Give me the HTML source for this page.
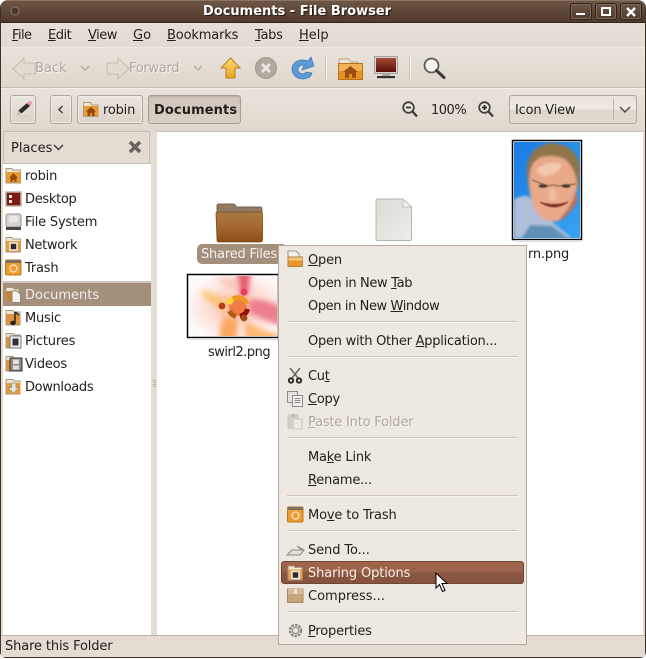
<!DOCTYPE html>
<html><head><meta charset="utf-8"><style>
*{box-sizing:border-box}
html,body{margin:0;padding:0;background:#fff}
body{width:646px;height:659px;position:relative;overflow:hidden;font:13px/16px "DejaVu Sans",sans-serif;color:#24201c}
.a{position:absolute}
.t{position:absolute;white-space:nowrap;line-height:16px;height:16px;margin-top:1px}
u{text-decoration:underline;text-underline-offset:1px}
.btn{position:absolute;border:1px solid #b2a79b;border-radius:3px;background:linear-gradient(#ebe5de,#dcd3c9);box-shadow:inset 0 0 0 1px #f0ebe5}
.sep{position:absolute;left:287px;width:231px;height:2px;background:linear-gradient(#cfc5ba 50%,#f8f6f3 50%)}
.dis{color:#b0a79d;text-shadow:1px 1px 0 #f6f3ef}
svg{position:absolute;overflow:visible}
</style></head><body>
<!-- window frame -->
<div class="a" style="left:0;top:0;width:646px;height:658px;background:#e4dcd3;border:1px solid #3f342c;border-top:0;border-radius:8px 8px 6px 6px;overflow:hidden">
<div class="a" style="left:0;top:0;width:644px;height:23px;background:linear-gradient(#6e5644,#4f392b);border-top:1px solid #8a7463;border-bottom:1px solid #33261d"></div>
<div class="a" style="left:0;top:23px;width:644px;height:25px;background:linear-gradient(#e7e0d8,#e2dad1);border-bottom:1px solid #f0ebe6"></div>
<div class="a" style="left:0;top:48px;width:644px;height:40px;background:linear-gradient(#e9e3db,#dfd7cd);border-bottom:1px solid #c8bdb1"></div>
<div class="a" style="left:0;top:88px;width:644px;height:43px;background:linear-gradient(#e9e3db,#e0d8cf);border-top:1px solid #f2eee9"></div>
</div>
<svg style="left:10px;top:5px" width="12" height="12"><circle cx="5" cy="6" r="4" fill="#4c382b" stroke="#8d7b6d"/></svg>
<div class="t" style="left:203px;top:3px;color:#fff;font-weight:bold;font-size:13px;text-shadow:1px 1px 1px #20150d">Documents - File Browser</div>
<!-- window buttons -->
<div class="a" style="left:570px;top:3px;width:22px;height:17px;border:1px solid #2f231b;border-radius:3px;background:linear-gradient(#6d5646,#503a2c);box-shadow:inset 0 0 0 1px #7f6a5a"></div>
<div class="a" style="left:595px;top:3px;width:22px;height:17px;border:1px solid #2f231b;border-radius:3px;background:linear-gradient(#6d5646,#503a2c);box-shadow:inset 0 0 0 1px #7f6a5a"></div>
<div class="a" style="left:620px;top:3px;width:22px;height:17px;border:1px solid #2f231b;border-radius:3px;background:linear-gradient(#6d5646,#503a2c);box-shadow:inset 0 0 0 1px #7f6a5a"></div>
<div class="a" style="left:576px;top:13px;width:9px;height:2px;background:#fff"></div>
<div class="a" style="left:601px;top:7px;width:10px;height:9px;border:2px solid #fff;border-top-width:2px"></div>
<svg style="left:626px;top:7px" width="10" height="10"><path d="M1 1L9 9M9 1L1 9" stroke="#fff" stroke-width="2.4"/></svg>
<!-- menu -->
<div class="t" style="left:12px;top:27px;letter-spacing:-.6px"><u>F</u>ile</div>
<div class="t" style="left:48px;top:27px;letter-spacing:-.5px"><u>E</u>dit</div>
<div class="t" style="left:88px;top:27px;letter-spacing:-.5px"><u>V</u>iew</div>
<div class="t" style="left:133px;top:27px"><u>G</u>o</div>
<div class="t" style="left:167px;top:27px;letter-spacing:-.15px"><u>B</u>ookmarks</div>
<div class="t" style="left:255px;top:27px;letter-spacing:-.3px"><u>T</u>abs</div>
<div class="t" style="left:299px;top:27px"><u>H</u>elp</div>
<!-- toolbar -->
<svg style="left:12px;top:57px" width="24" height="23"><path d="M1 11.5L12 1V6H23V17H12V22Z" fill="#e2dbd2" stroke="#c4bcb2"/></svg>
<div class="t dis" style="left:35px;top:60px">Back</div>
<svg style="left:80px;top:65px" width="10" height="7"><path d="M1 1L5 5L9 1" fill="none" stroke="#b5aca2" stroke-width="1.5"/></svg>
<svg style="left:106px;top:57px" width="24" height="23"><path d="M23 11.5L12 1V6H1V17H12V22Z" fill="#e2dbd2" stroke="#c4bcb2"/></svg>
<div class="t dis" style="left:129px;top:60px;letter-spacing:-.3px">Forward</div>
<svg style="left:193px;top:65px" width="10" height="7"><path d="M1 1L5 5L9 1" fill="none" stroke="#b5aca2" stroke-width="1.5"/></svg>
<svg style="left:220px;top:57px" width="21" height="22"><defs><linearGradient id="up" x1="0" y1="0" x2="0" y2="1"><stop offset="0" stop-color="#fbdc7e"/><stop offset="1" stop-color="#e9a21e"/></linearGradient></defs><path d="M10.5 1L20 11H15V21H6V11H1Z" fill="url(#up)" stroke="#b87d14"/></svg>
<svg style="left:255px;top:57px" width="22" height="22"><circle cx="11" cy="11" r="10.5" fill="#b2a89f"/><circle cx="11" cy="11" r="10.5" fill="none" stroke="#a1978e"/><path d="M7 7L15 15M15 7L7 15" stroke="#ece7e1" stroke-width="3"/></svg>
<svg style="left:291px;top:57px" width="24" height="24"><path d="M12 3C5 3 1 7 1 12C1 18 6 22 12 22C16 22 20 20 21 16L15 15C14 16.5 13.5 17 12 17C9 17 7 15 7 12.5C7 10 9 8 12 8L13 8L11 13L23 9L20 0L17 4C15.5 3.4 14 3 12 3Z" fill="#5d9bd8" stroke="#3f78b5" stroke-width=".7"/></svg>
<div class="a" style="left:325px;top:56px;width:2px;height:23px;background:linear-gradient(90deg,#cfc5ba 50%,#f3efea 50%)"></div>
<svg style="left:338px;top:58px" width="26" height="22"><path d="M1 1H11L13 4H20V8H1Z" fill="#efe4d4" stroke="#b7a38d"/><rect x=".5" y="5.5" width="24" height="16" fill="#e89120" stroke="#b8721d"/><rect x="1" y="6" width="23" height="7" fill="#f2b258"/><path d="M12.5 8L20 14H18V20H14V16H11V20H7V14H5Z" fill="#9c4e13"/></svg>
<svg style="left:374px;top:56px" width="25" height="24"><rect x=".5" y=".5" width="23" height="17" fill="#d4d0cb" stroke="#a8a39d"/><defs><linearGradient id="scr" x1="0" y1="0" x2="0" y2="1"><stop offset="0" stop-color="#a34b33"/><stop offset="1" stop-color="#5c0f08"/></linearGradient></defs><rect x="2" y="2" width="20" height="14" fill="url(#scr)"/><rect x="8" y="18" width="8" height="2" fill="#aaa59f"/><rect x="3" y="20" width="18" height="2" fill="#333"/><rect x="3" y="22" width="18" height="1" fill="#c4beb6"/></svg>
<div class="a" style="left:409px;top:56px;width:2px;height:23px;background:linear-gradient(90deg,#cfc5ba 50%,#f3efea 50%)"></div>
<svg style="left:423px;top:57px" width="23" height="22"><circle cx="8.5" cy="8.5" r="7" fill="#f5f3f0" stroke="#5f5a54" stroke-width="1.8"/><path d="M13.5 13.5L21 20.5" stroke="#3f3a35" stroke-width="3" stroke-linecap="round"/></svg>
<!-- location bar -->
<div class="btn" style="left:10px;top:95px;width:26px;height:29px"></div>
<svg style="left:15px;top:100px" width="18" height="18"><path d="M2 15L4 10L12 3L15 6L7 13Z" fill="#2d2a27"/><path d="M11.5 3.5L14 1Q16 .5 17 2.5Q17.5 4 15.5 6Z" fill="#e89cc0"/><path d="M2 15L4 11L6 13Z" fill="#e7d4b5"/><path d="M1 16H15" stroke="#cfc6bb"/></svg>
<div class="btn" style="left:50px;top:95px;width:22px;height:29px"></div>
<svg style="left:58px;top:105px" width="6" height="9"><path d="M4.5 1L1 4.5L4.5 8" fill="none" stroke="#4a443e" stroke-width="1.5"/></svg>
<div class="btn" style="left:77px;top:95px;width:66px;height:29px"></div>
<svg style="left:83px;top:102px" width="16" height="15"><path d="M.5.5H7L9 3H15V14.5H.5Z" fill="#efe4d4" stroke="#b29a7e"/><rect x="1" y="4" width="14" height="10" fill="#ea9b30"/><path d="M8 5L13 9.5H11.5V14H9V11H7V14H4.5V9.5H3Z" fill="#8e4711"/></svg>
<div class="t" style="left:103px;top:102px;letter-spacing:-.2px">robin</div>
<div class="a" style="left:148px;top:95px;width:93px;height:29px;border:1px solid #a99d90;border-radius:3px;background:linear-gradient(#cfc5ba,#d9d0c6);box-shadow:inset 0 1px 1px #b9aea2"></div>
<div class="t" style="left:154px;top:102px;font-weight:bold;letter-spacing:.1px">Documents</div>
<svg style="left:402px;top:101px" width="16" height="17"><circle cx="6.5" cy="6.5" r="5.3" fill="#ece7e1" stroke="#45403b" stroke-width="1.8"/><path d="M4 6.5H9" stroke="#2f2b27" stroke-width="1.8"/><path d="M10.5 10.5L15 15.5" stroke="#3d3833" stroke-width="2.2"/></svg>
<div class="t" style="left:431px;top:102px;letter-spacing:-.5px">100%</div>
<svg style="left:478px;top:101px" width="16" height="17"><circle cx="6.5" cy="6.5" r="5.3" fill="#ece7e1" stroke="#45403b" stroke-width="1.8"/><path d="M4 6.5H9M6.5 4V9" stroke="#2f2b27" stroke-width="1.8"/><path d="M10.5 10.5L15 15.5" stroke="#3d3833" stroke-width="2.2"/></svg>
<div class="a" style="left:509px;top:95px;width:128px;height:29px;border:1px solid #b2a79b;border-radius:3px;background:linear-gradient(#e7e1da 0,#efeae5 45%,#dfd6cc 55%,#e3dbd2 100%)"></div>
<div class="t" style="left:515px;top:102px;letter-spacing:-.2px">Icon View</div>
<div class="a" style="left:613px;top:99px;width:1px;height:21px;background:#bdb2a6"></div>
<svg style="left:619px;top:106px" width="12" height="8"><path d="M1 1L6 6L11 1" fill="none" stroke="#4a443e" stroke-width="1.4"/></svg>
<!-- sidebar -->
<div class="a" style="left:3px;top:131px;width:147px;height:33px;background:#e4dcd3;border:1px solid #c8bdb1"></div>
<div class="t" style="left:11px;top:140px">Places</div>
<svg style="left:53px;top:144px" width="11" height="7"><path d="M1 1L5.5 5.5L10 1" fill="none" stroke="#3c3732" stroke-width="1.4"/></svg>
<svg style="left:128px;top:140px" width="14" height="14"><path d="M2 2L12 12M12 2L2 12" stroke="#6a645d" stroke-width="3.6"/></svg>
<div class="a" style="left:3px;top:164px;width:148px;height:471px;background:#fff"></div>
<div class="a" style="left:3px;top:281px;width:148px;height:2px;background:#cfc5ba"></div>
<div class="a" style="left:3px;top:283px;width:148px;height:23px;background:#a48f7c"></div>
<div class="t" style="left:25px;top:168px;letter-spacing:-.2px">robin</div>
<div class="t" style="left:25px;top:191px;letter-spacing:-.3px">Desktop</div>
<div class="t" style="left:25px;top:214px;letter-spacing:-.2px">File System</div>
<div class="t" style="left:25px;top:237px;letter-spacing:-.3px">Network</div>
<div class="t" style="left:25px;top:260px;letter-spacing:-.2px">Trash</div>
<div class="t" style="left:25px;top:287px;color:#f2ede8">Documents</div>
<div class="t" style="left:25px;top:310px;letter-spacing:-.2px">Music</div>
<div class="t" style="left:25px;top:333px;letter-spacing:-.15px">Pictures</div>
<div class="t" style="left:25px;top:356px;letter-spacing:-.2px">Videos</div>
<div class="t" style="left:25px;top:379px;letter-spacing:-.35px">Downloads</div>
<!-- sidebar icons -->
<svg style="left:5px;top:168px" width="17" height="235">
<g><path d="M1 .5H7L8 2H15.5V15H1Z" fill="#f0e6d8" stroke="#ad9578"/><rect x="1.5" y="4" width="14" height="10.5" fill="#ea9b30"/><path d="M8.5 5L13 10H11.5V14H9.5V12H7.5V14H5.5V10H4Z" fill="#954a10"/></g>
<rect x="1" y="24" width="15" height="14" fill="#7c1a10" stroke="#b9b3ac" stroke-width="1.5"/><rect x="4" y="27" width="3" height="3" fill="#eee"/><rect x="4" y="32" width="3" height="3" fill="#eee"/>
<rect x="1" y="46" width="15" height="13" rx="2" fill="#d6d4d0" stroke="#96928c"/><ellipse cx="8.5" cy="51" rx="5" ry="3.5" fill="#eceae7"/><rect x="1" y="59" width="15" height="3" fill="#4a4641"/>
<path d="M1 69.5H7L8 71H15.5V84H1Z" fill="#f0e6d8" stroke="#ad9578"/><rect x="1.5" y="73" width="14" height="10.5" fill="#e99b37"/><rect x="5" y="75" width="7" height="7" fill="#2e2a27" stroke="#f4efe8" stroke-width="1.5"/>
<rect x=".5" y="92" width="15.5" height="15" rx="1" fill="#ee9a2e" stroke="#be7a20"/><rect x="1" y="92" width="15" height="3" fill="#7d6f62"/><circle cx="8.5" cy="100.5" r="3.5" fill="none" stroke="#f8dfb9" stroke-width="1.5"/>
<g transform="translate(0,119)"><path d="M1 .5H8L9 2H14V15H1Z" fill="#f0e6d8" stroke="#ad9578"/><rect x="1.5" y="4" width="8" height="10.5" fill="#c98230"/><path d="M7 4H12L15.5 7V15.5H7Z" fill="#f6f4f0" stroke="#8a857d"/></g>
<g transform="translate(0,142)"><path d="M1 .5H8L9 2H15V15H1Z" fill="#f0e6d8" stroke="#ad9578"/><rect x="1.5" y="4" width="13" height="10.5" fill="#de9436"/><path d="M10 2V12" stroke="#222" stroke-width="1.5"/><ellipse cx="8" cy="13" rx="2.8" ry="2.2" fill="#222"/><path d="M10 2L14 5" stroke="#222" stroke-width="1.5"/></g>
<g transform="translate(0,165)"><path d="M1 .5H8L9 2H15V15H1Z" fill="#f0e6d8" stroke="#ad9578"/><rect x="1.5" y="4" width="13" height="10.5" fill="#de9436"/><rect x="5" y="3" width="11" height="12" fill="#eee" stroke="#777"/><rect x="7.5" y="5.5" width="6" height="7" fill="#333"/></g>
<g transform="translate(0,188)"><path d="M1 .5H8L9 2H15V15H1Z" fill="#f0e6d8" stroke="#ad9578"/><rect x="1.5" y="4" width="13" height="10.5" fill="#de9436"/><rect x="5" y="2" width="12" height="13" fill="#8d8a86" stroke="#333"/><rect x="8" y="3.5" width="6" height="4.5" fill="#e2e0dc"/><rect x="8" y="9.5" width="6" height="4" fill="#e2e0dc"/></g>
<g transform="translate(0,211)"><path d="M1 .5H8L9 2H15V15H1Z" fill="#f0e6d8" stroke="#ad9578"/><rect x="1.5" y="4" width="14" height="10.5" fill="#ea9b30"/><path d="M6.5 4H11V8.5H14L8.5 14.5L3 8.5H6.5Z" fill="#e6e2dc" stroke="#8e8a84" stroke-width=".7"/></g>
</svg>
<!-- pane handle -->
<div class="a" style="left:151px;top:131px;width:6px;height:504px;background:#e4dcd3"></div>
<div class="a" style="left:153px;top:380px;width:3px;height:7px;background:repeating-linear-gradient(#b9aea2 0 1px,transparent 1px 2px)"></div>
<!-- icon view -->
<div class="a" style="left:157px;top:131px;width:486px;height:504px;background:#fff;border-top:1px solid #cbbfb2"></div>
<svg style="left:215px;top:203px" width="48" height="40"><defs><linearGradient id="fb" x1="0" y1="0" x2="0" y2="1"><stop offset="0" stop-color="#a87a45"/><stop offset=".45" stop-color="#a66a32"/><stop offset="1" stop-color="#8a4d16"/></linearGradient></defs><path d="M2 10V2.5Q2 1 4 1H19L22 4H45Q47 4 47 6V10Z" fill="#8f7a66" stroke="#7b6755"/><rect x="5" y="3" width="12" height="1.5" fill="#a07c50"/><path d="M1 10.5Q1 9 3 9H45Q47.5 9 47.5 10.5V37Q47.5 39 45 39H4Q2 39 2 37Z" fill="url(#fb)" stroke="#7b4a1c" stroke-width=".8"/></svg>
<div class="a" style="left:197px;top:244px;width:90px;height:20px;background:#a48f7c;border-radius:5px"></div>
<div class="t" style="left:201px;top:246px;color:#f5f1ec;letter-spacing:-.2px">Shared Files</div>
<!-- swirl -->
<svg style="left:187px;top:274px" width="92" height="65"><defs>
<radialGradient id="sw" cx=".55" cy=".52" r=".6"><stop offset="0" stop-color="#f7a48c"/><stop offset=".45" stop-color="#fbd8cc"/><stop offset="1" stop-color="#fffafa"/></radialGradient>
<filter id="bl1" x="-20%" y="-20%" width="140%" height="140%"><feGaussianBlur stdDeviation=".35"/></filter>
<filter id="bl2" x="-40%" y="-40%" width="180%" height="180%"><feGaussianBlur stdDeviation="2.6"/></filter>
<clipPath id="swc"><rect x="2" y="2" width="88" height="60"/></clipPath>
</defs>
<rect x=".5" y=".5" width="91" height="63" fill="#fff" stroke="#000" stroke-width="1.5"/>
<g clip-path="url(#swc)"><rect x="2" y="2" width="88" height="60" fill="url(#sw)"/>
<g filter="url(#bl2)"><path d="M50 -2L64 -2L61 20L53 22Z" fill="#e85f70"/><path d="M62 26Q80 24 96 34L96 52Q75 46 62 38Z" fill="#ee808e"/><path d="M58 46Q70 56 92 60L90 68L58 68Z" fill="#fdb870"/><path d="M12 16Q30 20 44 28L38 38Q24 32 12 16Z" fill="#fcc478"/><path d="M38 42Q30 55 34 68L50 68L50 45Z" fill="#fba760"/><path d="M28 4L50 4L50 20Z" fill="#fbcabd"/></g>
<g filter="url(#bl1)">
<circle cx="51" cy="33" r="9" fill="#ef7c48"/>
<path d="M42 30A9.5 9.5 0 0 1 60 30" fill="none" stroke="#ee9a24" stroke-width="5"/>
<path d="M42 30A9.5 9.5 0 0 1 46 25" fill="none" stroke="#f8d62e" stroke-width="5"/>
<path d="M42.5 37A9.5 9.5 0 0 0 49 42.3" fill="none" stroke="#ad5f0c" stroke-width="5"/>
<path d="M53 42.3A9.5 9.5 0 0 0 60.5 35" fill="none" stroke="#94090c" stroke-width="5"/>
<circle cx="57" cy="18" r="3.6" fill="#e63c60"/><circle cx="35" cy="32" r="3.4" fill="#b93a12"/><circle cx="57" cy="44" r="3.4" fill="#a04a16"/>
</g></g>
<rect x="3" y="64" width="88" height="2" fill="#ddd"/>
</svg>
<div class="t" style="left:208px;top:344px;letter-spacing:-.5px">swirl2.png</div>
<!-- blank file -->
<svg style="left:375px;top:198px" width="38" height="44"><defs><linearGradient id="pg" x1="0" y1="0" x2="1" y2="1"><stop offset="0" stop-color="#dcdcd6"/><stop offset=".6" stop-color="#e6e6e1"/><stop offset="1" stop-color="#eeeeea"/></linearGradient></defs><path d="M2.5 1H28L36.5 9V41Q36.5 42.5 35 42.5H2.5Q1 42.5 1 41V2.5Q1 1 2.5 1Z" fill="url(#pg)" stroke="#b5b5ae"/><path d="M28 1V9H36.5Z" fill="#f3f3f0" stroke="#b5b5ae" stroke-width=".7"/></svg>
<!-- portrait -->
<svg style="left:512px;top:140px" width="71" height="102"><defs>
<linearGradient id="sky" x1="0" y1="0" x2="1" y2="1"><stop offset="0" stop-color="#1a7ae4"/><stop offset="1" stop-color="#35a4f0"/></linearGradient>
<filter id="bl3" x="-20%" y="-20%" width="140%" height="140%"><feGaussianBlur stdDeviation="1.2"/></filter>
<filter id="bl4" x="-20%" y="-20%" width="140%" height="140%"><feGaussianBlur stdDeviation=".5"/></filter>
<clipPath id="pc"><rect x="2" y="2" width="66" height="96"/></clipPath>
</defs>
<rect x=".5" y=".5" width="69" height="99" fill="#fff" stroke="#000" stroke-width="1.5"/>
<g clip-path="url(#pc)"><rect x="2" y="2" width="66" height="96" fill="url(#sky)"/>
<g filter="url(#bl3)">
<path d="M2 60Q8 55 16 56L40 82L60 98H2Z" fill="#aebfda"/>
<path d="M10 98L18 85L40 86L56 98Z" fill="#5f90b6"/>
<path d="M15 36Q13 6 40 3Q68 5 68 32L66 50L17 50Z" fill="#8f7448"/>
<path d="M18 32Q20 20 30 17Q46 14 54 20Q64 30 65 44Q64 70 46 81Q30 84 22 68Q15 50 18 32Z" fill="#e9a98a"/>
<path d="M24 30Q34 20 50 24Q46 36 30 36Z" fill="#f2c8ae"/>
<path d="M38 48Q46 50 44 60Q40 62 36 58Z" fill="#f0bda3"/>
<path d="M50 76Q60 66 64 50L66 60Q60 74 46 82Z" fill="#b9705c"/>
</g>
<g filter="url(#bl4)">
<path d="M20 40L36 46M36 46Q42 44 46 46M46 46L64 44" fill="none" stroke="#7a5e40" stroke-width="1"/>
<ellipse cx="31" cy="46" rx="4.5" ry="1.8" fill="#4e3a2e"/><ellipse cx="54" cy="46" rx="4.5" ry="1.8" fill="#4e3a2e"/>
<path d="M28 62Q42 72 56 62Q42 67 28 62Z" fill="#7a2e26" stroke="#8f3e30"/>
</g></g>
<rect x="3" y="100" width="66" height="2" fill="#ddd"/>
</svg>
<div class="t" style="left:528px;top:246px;letter-spacing:-.2px">rn.png</div>
<!-- status -->
<div class="a" style="left:1px;top:635px;width:644px;height:22px;background:#e4dcd3;border-top:1px solid #bfb3a6"></div>
<div class="t" style="left:5px;top:638px;letter-spacing:-.13px">Share this Folder</div>
<!-- context menu -->
<div class="a" style="left:278px;top:245px;width:249px;height:400px;background:#ede8e2;border:1px solid #b7a999"></div>
<div class="a" style="left:281px;top:561px;width:243px;height:23px;border:1px solid #6f4734;border-radius:3px;background:linear-gradient(#a0654a 0,#9a624a 48%,#8b5640 52%,#865440 100%)"></div>
<div class="sep" style="top:321px"></div>
<div class="sep" style="top:356px"></div>
<div class="sep" style="top:437px"></div>
<div class="sep" style="top:495px"></div>
<div class="sep" style="top:530px"></div>
<div class="sep" style="top:611px"></div>
<div class="t" style="left:308px;top:252px;letter-spacing:-.2px"><u>O</u>pen</div>
<div class="t" style="left:308px;top:275px;letter-spacing:-.35px">Open in New <u>T</u>ab</div>
<div class="t" style="left:308px;top:298px;letter-spacing:-.4px">Open in New <u>W</u>indow</div>
<div class="t" style="left:308px;top:333px;letter-spacing:-.25px">Open with Other <u>A</u>pplication...</div>
<div class="t" style="left:308px;top:368px;letter-spacing:-.3px">Cu<u>t</u></div>
<div class="t" style="left:308px;top:391px;letter-spacing:-.25px"><u>C</u>opy</div>
<div class="t dis" style="left:308px;top:414px;letter-spacing:-.2px"><u>P</u>aste Into Folder</div>
<div class="t" style="left:308px;top:449px;letter-spacing:-.2px">Ma<u>k</u>e Link</div>
<div class="t" style="left:308px;top:472px;letter-spacing:-.2px"><u>R</u>ename...</div>
<div class="t" style="left:308px;top:507px;letter-spacing:-.15px">Mo<u>v</u>e to Trash</div>
<div class="t" style="left:308px;top:542px;letter-spacing:-.1px">Send To...</div>
<div class="t" style="left:308px;top:565px;color:#f5f0eb;letter-spacing:-.13px">Sharing Options</div>
<div class="t" style="left:308px;top:588px">Compress...</div>
<div class="t" style="left:308px;top:623px;letter-spacing:-.2px"><u>P</u>roperties</div>
<!-- menu icons -->
<svg style="left:287px;top:250px" width="17" height="390">
<path d="M1 1H9L12 4V9H1Z" fill="#f3f0ec" stroke="#9c968f"/><path d="M1 7H15.5V16.5H1Z" fill="#e8962a" stroke="#b0823f"/><rect x="1.5" y="7.5" width="14" height="3" fill="#f6c77c"/>
<g transform="translate(0,117)" fill="none" stroke="#6a655f"><path d="M3 1L11 11M13 1L5 11" stroke-width="1.5"/><circle cx="4" cy="13.5" r="2.2" stroke="#26231f" stroke-width="1.8"/><circle cx="12" cy="13.5" r="2.2" stroke="#26231f" stroke-width="1.8"/></g>
<g transform="translate(0,141)"><rect x=".5" y=".5" width="10" height="11" fill="#e6e3de" stroke="#8f8a84"/><rect x="5.5" y="4.5" width="10" height="11" fill="#f4f2ee" stroke="#8f8a84"/><path d="M7.5 7.5H13.5M7.5 9.5H13.5M7.5 11.5H13.5" stroke="#8f8a84"/></g>
<g transform="translate(0,163)" opacity=".5"><rect x="1" y="2" width="10" height="13" fill="#bdb7ae" stroke="#a9a399"/><rect x="4" y="1" width="4" height="3" fill="#97918a"/><rect x="6" y="6" width="9" height="10" fill="#eeeae4" stroke="#a9a399"/></g>
<g transform="translate(0,256)"><rect x=".5" y="1" width="15.5" height="15" rx="1" fill="#ee9a2e" stroke="#be7a20"/><rect x="1" y="1" width="15" height="3" fill="#7d6f62"/><circle cx="8.5" cy="9.5" r="3.5" fill="none" stroke="#f8dfb9" stroke-width="1.5"/></g>
<g transform="translate(0,292)"><path d="M0 13L5 8H15L10 4L17 8L13 13Z" fill="#e4e0da" stroke="#8c8780"/></g>
<g transform="translate(0,315)"><path d="M1 1H7L8 2.5H15V15H1Z" fill="#f0e6d8" stroke="#ad9578"/><rect x="1.5" y="4.5" width="14" height="10" fill="#e8a04a"/><rect x="5" y="6.5" width="7" height="7" fill="#2e2a27" stroke="#f4efe8" stroke-width="1.5"/></g>
<g transform="translate(0,338)"><rect x=".5" y="1" width="15.5" height="13.5" fill="#c4a47a" stroke="#a98a60"/><rect x="1" y="1" width="15" height="5" fill="#d6bb95"/><rect x="7" y="1" width="3" height="5" fill="#ede2d0"/></g>
<g transform="translate(0,372)" fill="#dedad4" stroke="#8f8a84"><circle cx="8.5" cy="8.5" r="5.5" stroke-dasharray="2.5 1.1" stroke-width="2.5"/><circle cx="8.5" cy="8.5" r="3" fill="#ede8e2"/></g>
</svg>
<!-- cursor -->
<svg style="left:435px;top:572px" width="14" height="21"><path d="M1 1V16L4.5 12.5L7.5 19.5L10 18.5L7 11.5H12Z" fill="#fff" stroke="#000"/></svg>
</body></html>
